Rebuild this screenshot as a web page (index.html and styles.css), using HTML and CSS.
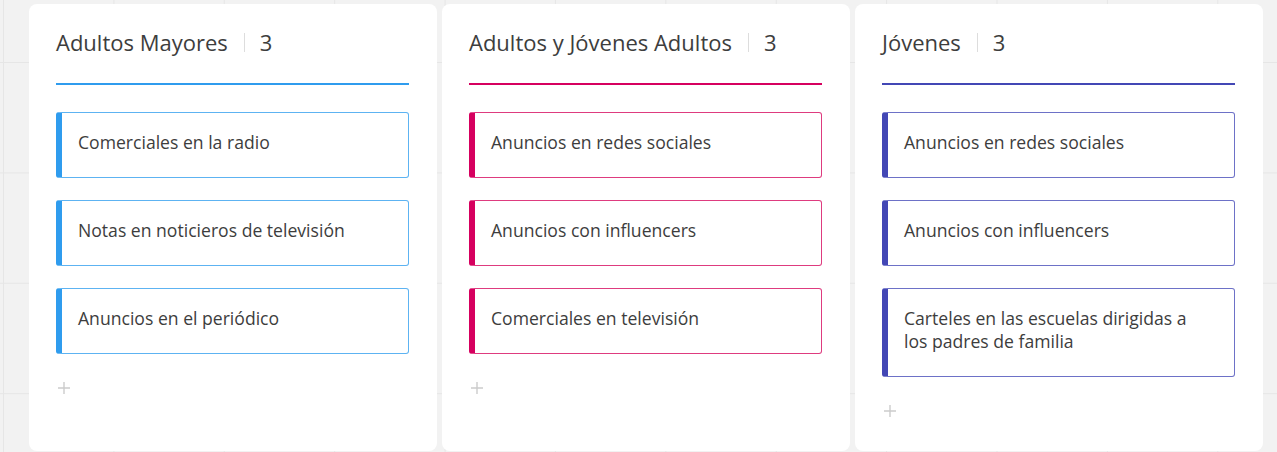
FILE: index.html
```html
<!DOCTYPE html>
<html lang="es">
<head>
<meta charset="utf-8">
<title>Tablero</title>
<link rel="stylesheet" href="styles.css">
</head>
<body>
<div class="board">
  <section class="column blue">
    <header class="col-head">
      <span class="col-title">Adultos Mayores</span>
      <span class="sep"></span>
      <span class="count">3</span>
    </header>
    <div class="items">
      <div class="item">Comerciales en la radio</div>
      <div class="item">Notas en noticieros de televisión</div>
      <div class="item">Anuncios en el periódico</div>
    </div>
    <button class="add" type="button" aria-label="Agregar"><svg width="12" height="12" viewBox="0 0 12 12"><path d="M6 0v12M0 6h12" stroke="#cccccc" stroke-width="1.4" fill="none"/></svg></button>
  </section>
  <section class="column pink">
    <header class="col-head">
      <span class="col-title">Adultos y Jóvenes Adultos</span>
      <span class="sep"></span>
      <span class="count">3</span>
    </header>
    <div class="items">
      <div class="item">Anuncios en redes sociales</div>
      <div class="item">Anuncios con influencers</div>
      <div class="item">Comerciales en televisión</div>
    </div>
    <button class="add" type="button" aria-label="Agregar"><svg width="12" height="12" viewBox="0 0 12 12"><path d="M6 0v12M0 6h12" stroke="#cccccc" stroke-width="1.4" fill="none"/></svg></button>
  </section>
  <section class="column indigo">
    <header class="col-head">
      <span class="col-title">Jóvenes</span>
      <span class="sep"></span>
      <span class="count">3</span>
    </header>
    <div class="items">
      <div class="item">Anuncios en redes sociales</div>
      <div class="item">Anuncios con influencers</div>
      <div class="item">Carteles en las escuelas dirigidas a los padres de familia</div>
    </div>
    <button class="add" type="button" aria-label="Agregar"><svg width="12" height="12" viewBox="0 0 12 12"><path d="M6 0v12M0 6h12" stroke="#cccccc" stroke-width="1.4" fill="none"/></svg></button>
  </section>
</div>
</body>
</html>
```
FILE: styles.css
```css
html, body {
  margin: 0;
  height: 100%;
  overflow: hidden;
}
body {
  font-family: "Open Sans", "Noto Sans", sans-serif;
  color: #3d3d3d;
  background-color: #f2f2f2;
  background-image:
    linear-gradient(to right, #e6e6e6 1px, transparent 1px),
    linear-gradient(to bottom, #e6e6e6 1px, transparent 1px);
  background-size: 110.4px 110.4px;
  background-position: 3px 62px;
}
.board {
  display: flex;
  gap: 5px;
  padding: 4px 0 0 29px;
  align-items: flex-start;
}
.column {
  box-sizing: border-box;
  width: 408px;
  height: 447px;
  flex: none;
  background: #ffffff;
  border-radius: 8px;
  padding: 0 28px 0 27px;
  display: flex;
  flex-direction: column;
}
.col-head {
  display: flex;
  align-items: center;
  padding: 24px 0 27px;
  line-height: 28px;
  font-size: 22px;
  color: #3d3d3d;
  border-bottom: 2px solid var(--accent);
}
.sep {
  width: 1px;
  height: 19px;
  background: #dddddd;
  margin: 0 15px 0 16px;
}
.items {
  display: flex;
  flex-direction: column;
  gap: 22px;
  margin-top: 27px;
}
.item {
  box-sizing: border-box;
  border: 1px solid var(--edge);
  border-left: 6px solid var(--accent);
  border-radius: 3px;
  padding: 18px 30px 23px 16px;
  font-size: 17.6px;
  line-height: 23px;
  color: #3d3d3d;
}
.add {
  align-self: flex-start;
  margin: 28px 0 0 2px;
  padding: 0;
  border: 0;
  background: none;
  width: 12px;
  height: 12px;
  display: flex;
}
.blue { --accent: #2f9cee; --edge: #5db3f2; }
.pink { --accent: #d6005f; --edge: #de3b7f; }
.indigo { --accent: #4347b5; --edge: #6d71c7; }
```
